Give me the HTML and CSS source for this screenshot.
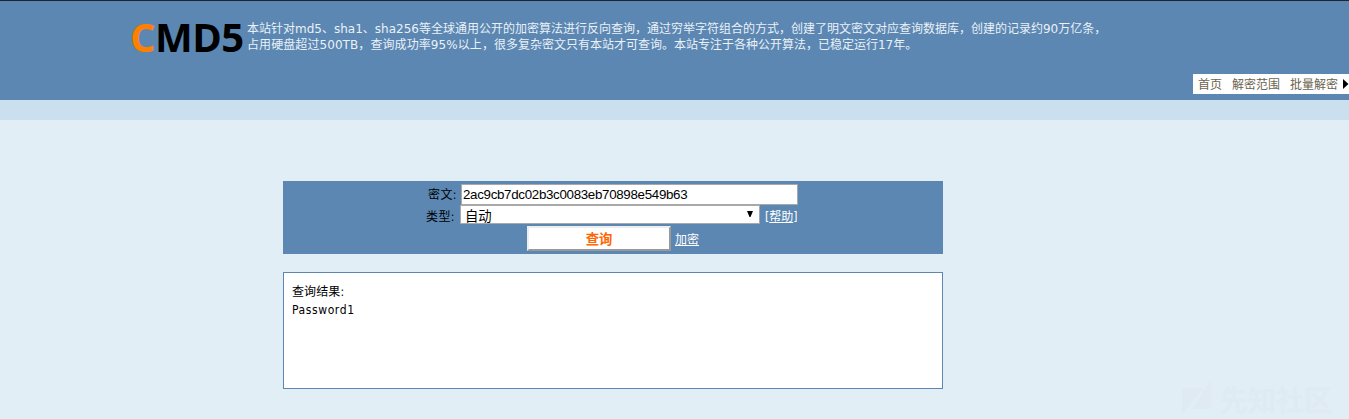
FILE: index.html
```html
<!DOCTYPE html>
<html lang="zh-CN">
<head>
<meta charset="utf-8">
<title>CMD5</title>
<link rel="stylesheet" href="styles.css">
</head>
<body>
<header class="header">
  <div class="brand">
    <div class="logo"><span class="logo-c">C</span>MD5</div>
    <p class="intro">本站针对md5、sha1、sha256等全球通用公开的加密算法进行反向查询，通过穷举字符组合的方式，创建了明文密文对应查询数据库，创建的记录约90万亿条，<br><span class="intro-stats">占用硬盘超过500TB，查询成功率95%以上，</span>很多复杂密文只有本站才可查询。本站专注于各种公开算法，已稳定运行17年。</p>
  </div>
  <nav class="nav">
    <a>首页</a><a>解密范围</a><a>批量解密</a>
    <svg class="nav-arrow" width="6" height="10" viewBox="0 0 6 10"><path d="M0 0L5.5 5L0 10Z"/></svg>
  </nav>
</header>
<div class="strip"></div>
<main class="main">
  <form class="query">
    <div class="row row-hash"><label>密文:</label><div class="field">2ac9cb7dc02b3c0083eb70898e549b63</div></div>
    <div class="row row-type"><label>类型:</label><div class="select"><span>自动</span><svg width="6" height="6" viewBox="0 0 6 6"><path d="M0 0H6L3.5 6H2.5Z"/></svg></div><span class="help">[<a>帮助</a>]</span></div>
    <div class="row row-submit"><button type="button" class="submit">查询</button><a class="encrypt">加密</a></div>
  </form>
  <section class="result">
    <div>查询结果:</div>
    <div class="plain">Password1</div>
  </section>
</main>
<div class="watermark">
  <svg width="31" height="34" viewBox="0 0 31 34"><path d="M1 8H22L1 34ZM30 0V29H11Z"/></svg>
  <span>先知社区</span>
</div>
</body>
</html>
```
FILE: styles.css
```css
* { box-sizing: border-box; }
body {
  margin: 0;
  height: 419px;
  overflow: hidden;
  position: relative;
  background: #e1eef6;
  color: #000;
  font: 12px/18px "DejaVu Sans Condensed", "Noto Sans CJK SC", sans-serif;
}
.header {
  height: 100px;
  background: #5b87b2;
  border-top: 1px solid #20242c;
  display: flex;
  flex-direction: column;
  justify-content: space-between;
  padding-bottom: 6px;
}
.brand { display: flex; padding-left: 130px; }
.logo {
  width: 117px;
  padding-top: 9px;
  font: bold 40px/54px "Open Sans", sans-serif;
  letter-spacing: -0.5px;
}
.logo-c { color: #ff8000; }
.intro {
  margin: 20px 0 0;
  font: 12px/16px "DejaVu Sans", "Noto Sans CJK SC", sans-serif;
  color: #eaf1f7;
  white-space: nowrap;
}
.intro-stats { letter-spacing: 0.08px; }
.nav {
  align-self: flex-end;
  width: 156px;
  height: 20px;
  padding: 0 0 0 5px;
  background: #fff;
  color: #6b6350;
  display: flex;
  align-items: center;
  gap: 10px;
  line-height: 20px;
  white-space: nowrap;
}
.nav a { padding-top: 2px; }
.nav-arrow { margin-left: -5px; fill: #000; }
.strip { height: 20px; background: #cbe0ee; }
.main { width: 660px; margin: 61px 0 0 283px; }
.query {
  height: 73px;
  padding-top: 3px;
  background: #5b87b2;
}
.row { display: flex; }
.row-hash { height: 21px; padding-left: 145px; }
.row-type { height: 20px; padding-left: 143px; }
.row-submit { height: 25px; padding: 1px 0 0 244px; }
label { width: 33px; line-height: 23px; letter-spacing: 0.4px; white-space: nowrap; }
.row-type label { width: 34px; line-height: 25px; }
.field {
  width: 337px;
  height: 21px;
  padding-left: 1px;
  border: 1px solid #a9a9a9;
  background: #fff;
  font: 13.33px/19px "Liberation Sans", sans-serif;
  letter-spacing: -0.31px;
}
.select {
  width: 300px;
  height: 19px;
  padding: 0 6px 0 4px;
  border: 1px solid #a9a9a9;
  background: #fff;
  display: flex;
  justify-content: space-between;
  font-size: 13.33px;
  line-height: 21px;
}
.select svg { margin-top: 5px; }
.help { margin-left: 5px; line-height: 25px; color: #fff; }
.help a, .encrypt { text-decoration: underline; }
.submit {
  width: 144px;
  height: 25px;
  padding: 0;
  border: 2px solid;
  border-color: #eee #999 #999 #eee;
  background: #fff;
  color: #ff6600;
  font: bold 13.33px/21px "Noto Sans CJK SC", sans-serif;
}
.encrypt { margin-left: 4px; line-height: 29px; color: #fff; }
.result {
  height: 117px;
  margin-top: 18px;
  padding: 10px 8px;
  border: 1px solid #5b87b2;
  background: #fff;
  letter-spacing: 0.1px;
}
.plain { letter-spacing: 0.6px; }
.watermark {
  position: absolute;
  left: 1181px;
  top: 380px;
  display: flex;
  gap: 8px;
  color: #dfeaf2;
  font: bold 28px/38px "Noto Sans CJK SC", sans-serif;
}
.watermark svg { fill: #dfeaf2; }
```
